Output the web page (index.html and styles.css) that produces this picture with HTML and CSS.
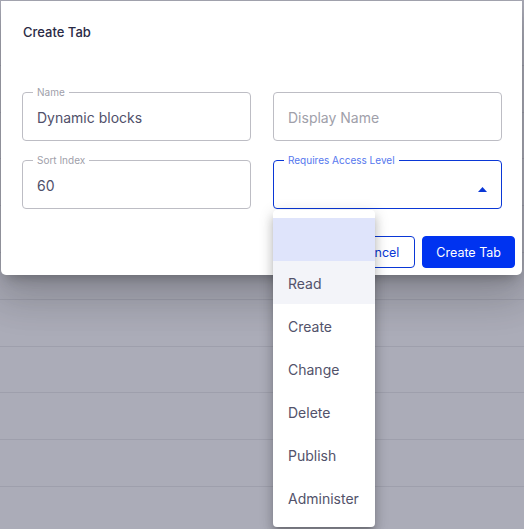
FILE: index.html
```html
<!DOCTYPE html>
<html lang="en">
<head>
<meta charset="utf-8">
<title>Create Tab</title>
<link rel="stylesheet" href="styles.css">
</head>
<body>
<div class="backdrop">
  <div class="row"></div>
  <div class="row"></div>
  <div class="row"></div>
  <div class="row"></div>
  <div class="row"></div>
  <div class="row"></div>
  <div class="row"></div>
  <div class="row"></div>
  <div class="row"></div>
  <div class="row"></div>
  <div class="row"></div>
</div>

<div class="dialog">
  <h2 class="title">Create Tab</h2>
  <div class="fields">
    <div class="field">
      <span class="label">Name</span>
      <span class="value">Dynamic blocks</span>
    </div>
    <div class="field">
      <span class="placeholder">Display Name</span>
    </div>
    <div class="field">
      <span class="label">Sort Index</span>
      <span class="value">60</span>
    </div>
    <div class="field focused">
      <span class="label">Requires Access Level</span>
      <span class="value"></span>
      <svg class="arrow" width="9" height="5" viewBox="0 0 9 5"><path d="M0 5 L4.5 0 L9 5 Z" fill="#0a37d6"/></svg>
    </div>
  </div>
  <div class="actions">
    <button class="btn outline">Cancel</button>
    <button class="btn primary">Create Tab</button>
  </div>
</div>

<ul class="menu">
  <li class="item selected">&nbsp;</li>
  <li class="item hover">Read</li>
  <li class="item">Create</li>
  <li class="item">Change</li>
  <li class="item">Delete</li>
  <li class="item">Publish</li>
  <li class="item">Administer</li>
</ul>
</body>
</html>
```

FILE: styles.css
```css
* { box-sizing: border-box; }

html, body {
  margin: 0;
  padding: 0;
  width: 524px;
  height: 529px;
  overflow: hidden;
  font-family: Inter, "Noto Sans", sans-serif;
}

body {
  background: #abacb8;
  position: relative;
}

.backdrop {
  display: flex;
  flex-direction: column;
  padding-top: 19px;
}

.row {
  height: 46.8px;
  border-bottom: 1px solid #9e9fac;
}

.dialog {
  position: absolute;
  top: 1px;
  left: 1px;
  width: 521px;
  height: 274px;
  background: #ffffff;
  border-radius: 0 0 5px 5px;
  box-shadow: 0 8px 12px -6px rgba(0,0,0,0.28), 0 24px 38px 3px rgba(0,0,0,0.12), 0 9px 46px 8px rgba(0,0,0,0.1);
  padding: 23px 7px 0 21px;
  display: flex;
  flex-direction: column;
}

.title {
  margin: 0;
  font-size: 13px;
  line-height: 16px;
  font-weight: 500;
  color: #2a2a45;
  padding-left: 1px;
}

.fields {
  margin-top: 52px;
  display: grid;
  grid-template-columns: 229px 229px;
  column-gap: 22px;
  row-gap: 19px;
}

.field {
  position: relative;
  height: 49px;
  border: 1px solid #bdbdc4;
  border-radius: 4px;
  display: flex;
  align-items: center;
  padding: 0 14px;
}

.field.focused {
  border-color: #0a37d6;
}

.label {
  position: absolute;
  top: -7px;
  left: 10px;
  padding: 0 4px;
  background: #fff;
  font-size: 10px;
  line-height: 12px;
  color: #a0a0aa;
}

.focused .label {
  color: #5577ee;
}

.value {
  font-size: 14px;
  color: #50506a;
  padding-top: 1px;
}

.placeholder {
  font-size: 14px;
  color: #a0a0aa;
  padding-top: 1px;
}

.arrow {
  position: absolute;
  right: 14px;
  top: 26px;
}

.actions {
  margin-top: 27px;
  display: flex;
  justify-content: flex-end;
  gap: 7px;
}

.btn {
  height: 32px;
  border-radius: 4px;
  font-family: Inter, "Noto Sans", sans-serif;
  font-size: 12.5px;
  padding: 0 13px;
  cursor: pointer;
}

.btn.outline {
  background: #fff;
  border: 1px solid #0a37d6;
  color: #0a37d6;
  padding: 0 15px;
}

.btn.primary {
  background: #0033f0;
  border: 1px solid #0033f0;
  color: #fff;
}

.menu {
  position: absolute;
  top: 210px;
  left: 273px;
  width: 102px;
  margin: 0;
  padding: 8px 0;
  list-style: none;
  background: #fff;
  border-radius: 4px;
  box-shadow: 0 5px 5px -3px rgba(0,0,0,0.2), 0 8px 10px 1px rgba(0,0,0,0.14), 0 3px 14px 2px rgba(0,0,0,0.12);
}

.item {
  height: 43px;
  display: flex;
  align-items: center;
  padding-left: 15px;
  padding-top: 1px;
  font-size: 14px;
  color: #52526a;
}

.item.selected {
  background: #dfe4fb;
}

.item.hover {
  background: #f3f4f9;
}
```
